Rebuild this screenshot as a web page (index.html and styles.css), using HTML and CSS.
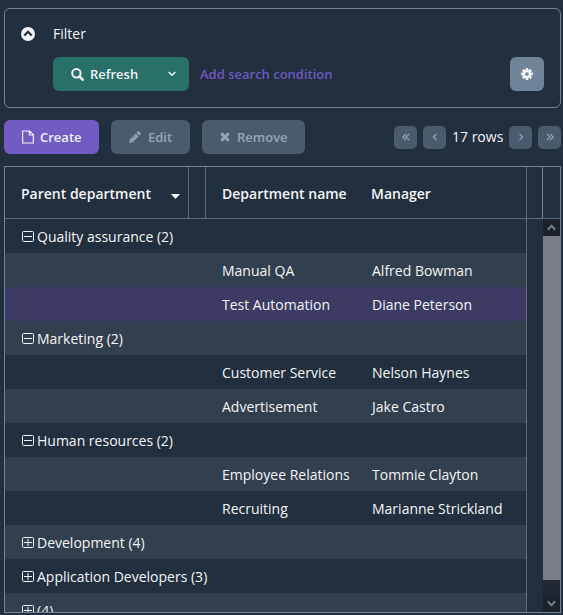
FILE: index.html
```html
<!DOCTYPE html>
<html lang="en">
<head>
<meta charset="utf-8">
<title>Departments</title>
<link rel="stylesheet" href="styles.css">
</head>
<body>
<section class="filter">
  <div class="filter-head">
    <svg class="collapse" width="14" height="14" viewBox="0 0 14 14"><circle cx="7" cy="7" r="7" fill="#f1f2f4"/><path d="M3.3 8.5 7 4.8l3.7 3.7" fill="none" stroke="#232f3e" stroke-width="2.2"/></svg>
    <span>Filter</span>
  </div>
  <div class="filter-body">
    <button class="btn refresh"><svg width="13" height="13" viewBox="0 0 13 13"><circle cx="5.4" cy="5.3" r="4.2" fill="none" stroke="currentColor" stroke-width="2"/><path d="m8.5 8.5 3.2 3.2" stroke="currentColor" stroke-width="2.5" stroke-linecap="round"/></svg><span>Refresh</span><svg class="caret" width="8" height="6" viewBox="0 0 8 6"><path d="m.7 1 3.3 3.3L7.3 1" fill="none" stroke="currentColor" stroke-width="1.5"/></svg></button>
    <a class="add">Add search condition</a>
    <button class="btn settings"><svg width="12" height="12" viewBox="-6 -6 12 12"><circle r="3.1" fill="none" stroke="currentColor" stroke-width="2.7"/><path d="M0-6V-3.5M0 3.5V6M-6 0h2.5M3.5 0H6M-4.2-4.2l1.7 1.7M2.5 2.5l1.7 1.7M-4.2 4.2l1.7-1.7M2.5-2.5l1.7-1.7" stroke="currentColor" stroke-width="2.5"/></svg></button>
  </div>
</section>
<div class="toolbar">
  <button class="btn create"><svg width="12" height="14" viewBox="0 0 12 14"><path d="M.6 1h7l3.8 3.8V13H.6zM7.3 1v4h4" fill="none" stroke="currentColor" stroke-width="1.2"/></svg><span>Create</span></button>
  <button class="btn edit" disabled><svg width="12" height="12" viewBox="0 0 12 12"><path d="M0 12l.8-3.5 6-6 2.8 2.8-6 6zM7.5 1.8 8.8.5q.6-.6 1.2 0l1.6 1.6q.6.6 0 1.2l-1.3 1.3z" fill="currentColor"/><path d="m1.1 9.3 1.5 1.5M3 8.2l4-4" stroke="#4a5b6d" stroke-width=".6"/></svg><span>Edit</span></button>
  <button class="btn remove" disabled><svg width="10" height="10" viewBox="0 0 10 10"><path d="m1.3 1.3 7.4 7.4M8.7 1.3 1.3 8.7" stroke="currentColor" stroke-width="3"/></svg><span>Remove</span></button>
  <nav class="pager">
    <button class="page"><svg width="8" height="8" viewBox="0 0 9 9"><path d="M4.4 1 1 4.5 4.4 8M8 1 4.6 4.5 8 8"/></svg></button>
    <button class="page"><svg width="8" height="8" viewBox="0 0 9 9"><path d="M6.2 1 2.7 4.5 6.2 8"/></svg></button>
    <span class="count">17 rows</span>
    <button class="page"><svg width="8" height="8" viewBox="0 0 9 9"><path d="m2.8 1 3.5 3.5L2.8 8"/></svg></button>
    <button class="page"><svg width="8" height="8" viewBox="0 0 9 9"><path d="m1 1 3.4 3.5L1 8M4.6 1 8 4.5 4.6 8"/></svg></button>
  </nav>
</div>
<div class="table">
  <div class="thead">
    <div class="th parent">Parent department<svg class="sort" width="9" height="5" viewBox="0 0 9 5"><path d="M0 0h9L4.5 5z" fill="#fff"/></svg></div>
    <div class="th gap"></div>
    <div class="th name">Department name</div>
    <div class="th manager">Manager</div>
    <div class="th spare"></div>
    <div class="th corner"></div>
  </div>
  <div class="tbody">
    <div class="rows">
      <div class="row"><svg class="box" viewBox="0 0 12 12"><path d="M2 5.5h8"/><rect x=".5" y=".5" width="11" height="10" rx="1"/></svg>Quality assurance (2)</div>
      <div class="row leaf light"><span>Manual QA</span><span>Alfred Bowman</span></div>
      <div class="row leaf selected"><span>Test Automation</span><span>Diane Peterson</span></div>
      <div class="row light"><svg class="box" viewBox="0 0 12 12"><path d="M2 5.5h8"/><rect x=".5" y=".5" width="11" height="10" rx="1"/></svg>Marketing (2)</div>
      <div class="row leaf"><span>Customer Service</span><span>Nelson Haynes</span></div>
      <div class="row leaf light"><span>Advertisement</span><span>Jake Castro</span></div>
      <div class="row"><svg class="box" viewBox="0 0 12 12"><path d="M2 5.5h8"/><rect x=".5" y=".5" width="11" height="10" rx="1"/></svg>Human resources (2)</div>
      <div class="row leaf light"><span>Employee Relations</span><span>Tommie Clayton</span></div>
      <div class="row leaf"><span>Recruiting</span><span>Marianne Strickland</span></div>
      <div class="row light"><svg class="box" viewBox="0 0 12 12"><path d="M2 5.5h8M6 2v7"/><rect x=".5" y=".5" width="11" height="10" rx="1"/></svg>Development (4)</div>
      <div class="row"><svg class="box" viewBox="0 0 12 12"><path d="M2 5.5h8M6 2v7"/><rect x=".5" y=".5" width="11" height="10" rx="1"/></svg>Application Developers (3)</div>
      <div class="row light"><svg class="box" viewBox="0 0 12 12"><path d="M2 5.5h8M6 2v7"/><rect x=".5" y=".5" width="11" height="10" rx="1"/></svg>(4)</div>
    </div>
    <div class="scrollbar">
      <div class="arrow"><svg width="9" height="7" viewBox="0 0 9 7"><path d="m.8 5.8 3.7-4 3.7 4"/></svg></div>
      <div class="thumb"></div>
      <div class="arrow"><svg width="9" height="7" viewBox="0 0 9 7"><path d="m.8 1.2 3.7 4 3.7-4"/></svg></div>
    </div>
  </div>
</div>
</body>
</html>
```
FILE: styles.css
```css
* { box-sizing: border-box; }
body {
  margin: 0;
  height: 615px;
  overflow: hidden;
  padding: 8px 2px 0 4px;
  background: #222f3e;
  color: #f4f5f6;
  font: 14px/20px "Open Sans", "Noto Sans", sans-serif;
}
svg { display: block; flex: none; }
.filter {
  height: 100px;
  border: 1px solid #708499;
  border-radius: 6px;
  padding: 15px 16px 0 16px;
}
.filter-head { display: flex; align-items: center; gap: 18px; height: 20px; }
.collapse { margin-top: -1px; }
.filter-body { display: flex; align-items: center; margin: 13px 0 0 32px; }
.btn {
  display: flex;
  align-items: center;
  height: 34px;
  padding: 0;
  border: 0;
  border-radius: 6px;
  color: #f1f2f4;
  font: 600 13px/20px "Open Sans", "Noto Sans", sans-serif;
}
.refresh { width: 136px; padding: 0 13px 0 18px; gap: 6px; background: #287068; }
.caret { margin-left: auto; }
.add { margin-left: 11px; color: #6e5ac0; font-weight: 600; font-size: 13px; }
.settings { width: 34px; margin-left: auto; justify-content: center; background: #708499; }
.toolbar { display: flex; height: 34px; margin-top: 12px; gap: 12px; }
.create { width: 95px; padding-left: 18px; gap: 6px; background: #705cc2; }
.edit, .remove { background: #4a5b6d; color: #94a6b8; }
.edit { width: 79px; padding-left: 18px; gap: 7px; }
.remove { width: 103px; padding-left: 18px; gap: 7px; }
.pager { display: flex; align-items: center; margin-left: auto; gap: 6px; }
.page {
  display: flex;
  align-items: center;
  justify-content: center;
  width: 23px;
  height: 23px;
  padding: 0 0 1px 1px;
  border: 0;
  border-radius: 5px;
  background: #4a5b6d;
}
.page path { fill: none; stroke: #94a6b8; stroke-width: 1.4; }
.count { width: 51px; text-align: center; white-space: nowrap; }
.table { height: 447px; margin-top: 12px; border: 1px solid #708499; }
.thead { display: flex; height: 52px; border-bottom: 1px solid #5b6b7c; font-weight: 600; }
.th { display: flex; align-items: center; padding: 3px 0 0 16px; white-space: nowrap; }
.parent { width: 184px; padding-right: 8px; border-right: 1px solid #5b6b7c; }
.sort { margin: 5px 0 0 auto; }
.gap { width: 17px; border-right: 1px solid #5b6b7c; padding: 0; }
.name { width: 150px; }
.manager { width: 171px; padding-left: 15px; border-right: 1px solid #5b6b7c; }
.spare { width: 16px; padding: 0; border-right: 1px solid #708499; }
.tbody { display: flex; height: 393px; }
.rows { width: 522px; overflow: hidden; border-right: 1px solid #5b6b7c; }
.row { display: flex; align-items: center; height: 34px; padding: 2px 0 0 17px; white-space: nowrap; }
.leaf { display: grid; grid-template-columns: 150px 1fr; padding-left: 217px; }
.light { background: #323f4e; }
.selected { background: #3b3b63; }
.box { width: 12px; height: 12px; margin-right: 3px; fill: none; stroke: #f1f2f4; stroke-width: 1; }
.scrollbar { display: flex; flex-direction: column; width: 17px; margin-left: 16px; background: #222833; }
.arrow { display: flex; align-items: center; justify-content: center; height: 17px; background: #1c222c; }
.arrow path { fill: none; stroke: #747a83; stroke-width: 2; }
.thumb { height: 344px; margin-bottom: 15px; background: #797d85; }
```
